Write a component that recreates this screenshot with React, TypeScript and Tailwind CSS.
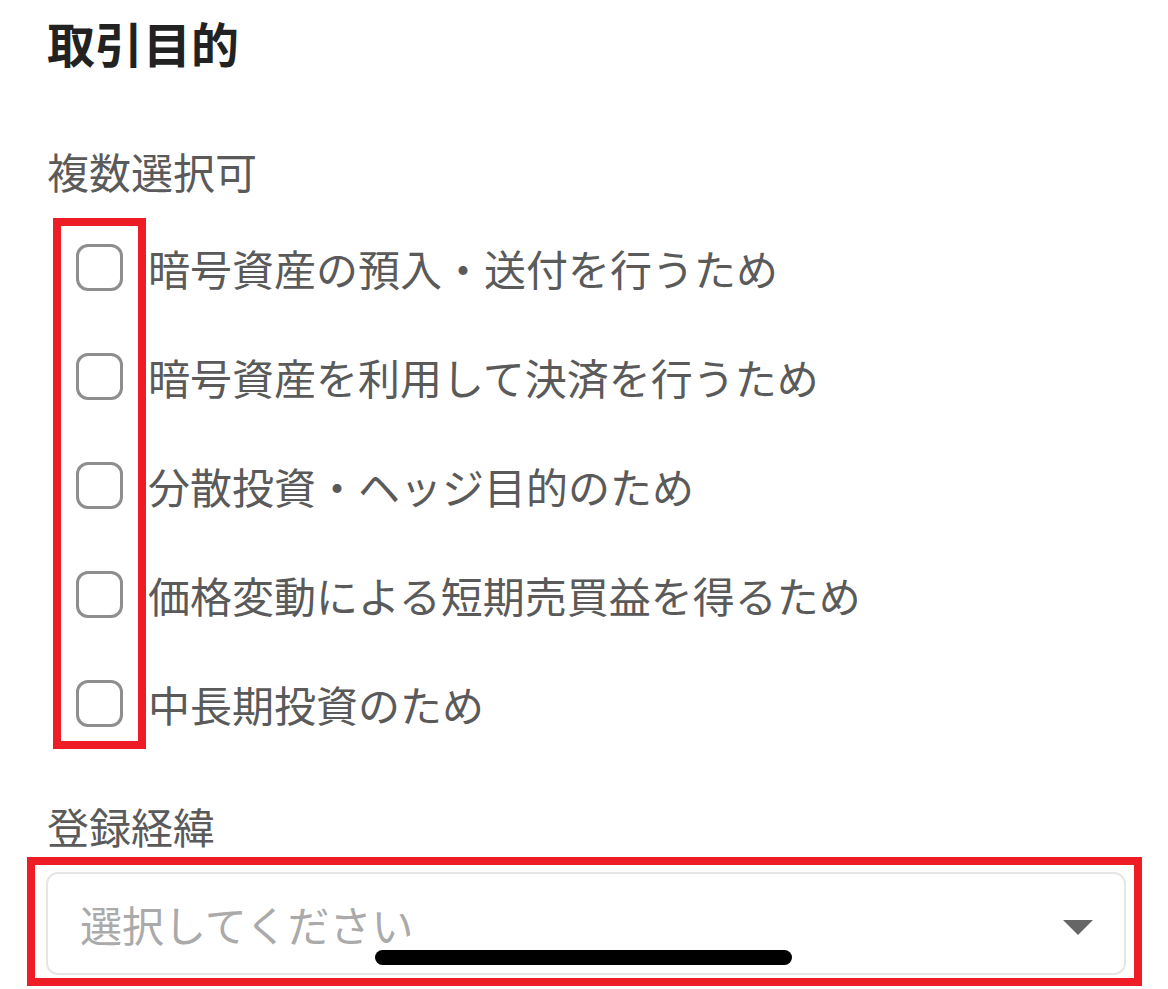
import React from "react";

const options = [
  "暗号資産の預入・送付を行うため",
  "暗号資産を利用して決済を行うため",
  "分散投資・ヘッジ目的のため",
  "価格変動による短期売買益を得るため",
  "中長期投資のため",
];

export default function App() {
  return (
    <div
      className="relative h-[989px] w-[1168px] overflow-hidden bg-white"
      style={{ fontFamily: '"Noto Sans CJK JP", "Noto Sans", sans-serif' }}
    >
      <div className="pl-[47px]">
        <h1 className="h-[84px] text-[48px] leading-[84px] font-bold text-[#222222]">
          取引目的
        </h1>

        <div className="mt-[57px] h-[60px] text-[42px] leading-[60px] text-[#5a5a5a]">
          複数選択可
        </div>

        <ul className="mt-[12px]">
          {options.map((label) => (
            <li key={label} className="flex h-[109px] items-center">
              <span className="ml-[29px] h-[47px] w-[47px] shrink-0 rounded-[12px] border-[3px] border-[#8e8e8e]" />
              <span className="ml-[25px] text-[42px] leading-[60px] text-[#5a5a5a]">
                {label}
              </span>
            </li>
          ))}
        </ul>

        <div className="mt-[38px] h-[60px] text-[42px] leading-[60px] text-[#5a5a5a]">
          登録経緯
        </div>
      </div>

      <div className="mt-[16px] pl-[46px] pr-[42px]">
        <div className="flex h-[103px] items-center justify-between rounded-[12px] border-2 border-[#e6e6e6] pl-[32px] pr-[31px]">
          <span className="text-[42px] leading-[60px] text-[#aaaaaa]">
            選択してください
          </span>
          <svg width="30" height="15" viewBox="0 0 30 15" className="mt-[8px]">
            <path d="M0 0 H30 L15 15 Z" fill="#666666" />
          </svg>
        </div>
      </div>

      {/* annotation boxes */}
      <div className="absolute left-[53px] top-[218px] h-[531px] w-[93px] border-[8px] border-[#ee1c25]" />
      <div className="absolute left-[27px] top-[857px] h-[129px] w-[1115px] border-[8px] border-[#ee1c25]" />

      {/* home indicator */}
      <div className="absolute left-[375px] top-[950px] h-[15px] w-[417px] rounded-full bg-black" />
    </div>
  );
}
